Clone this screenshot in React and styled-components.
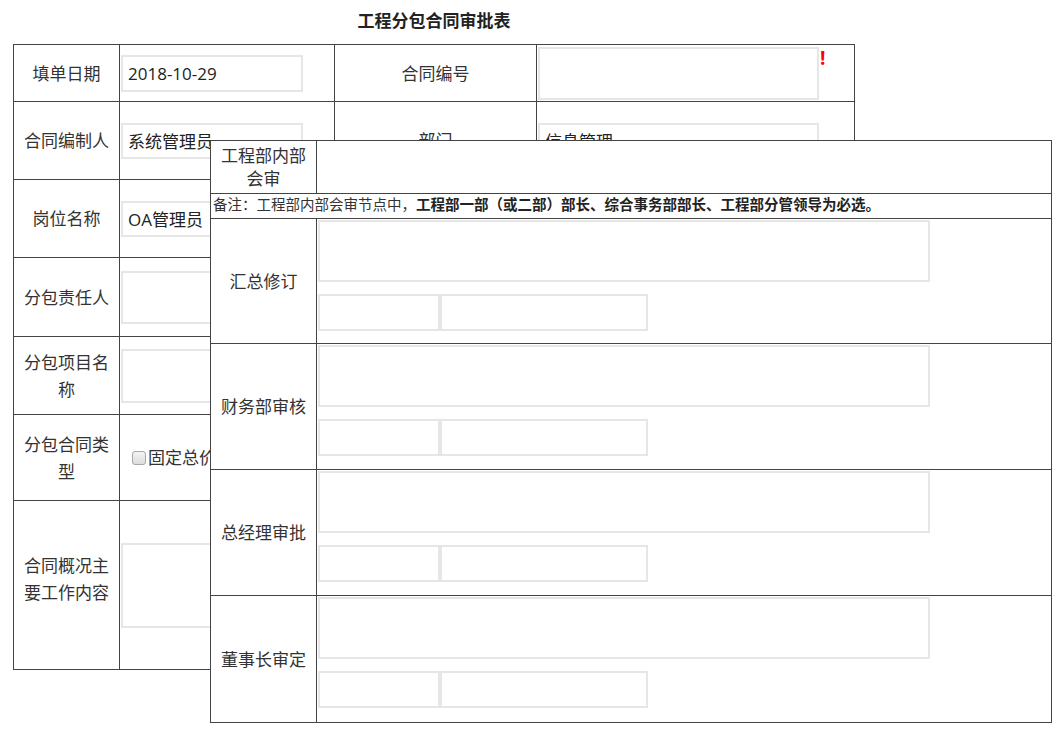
import React from "react";
import styled, { createGlobalStyle } from "styled-components";

const GlobalStyle = createGlobalStyle`
  body {
    margin: 0;
    background: #ffffff;
    font-family: "Open Sans", "Noto Sans CJK SC", sans-serif;
    color: #333333;
  }
`;

function FieldInput({ width = 182, height = 36, value = "" }) {
  return <TextInput $w={width} $h={height} defaultValue={value} readOnly />;
}

function ApprovalRow({ label, height }) {
  return (
    <tr>
      <OverlayLabel $h={height}>{label}</OverlayLabel>
      <OverlayValue>
        <ApprovalBox>
          <Opinion readOnly />
          <SignRow>
            <FieldInput width={122} height={37} />
            <FieldInput width={208} height={37} />
          </SignRow>
        </ApprovalBox>
      </OverlayValue>
    </tr>
  );
}

function App() {
  return (
    <Page>
      <GlobalStyle />
      <Title>工程分包合同审批表</Title>
      <MainTable>
        <colgroup>
          <col style={{ width: 106 }} />
          <col style={{ width: 215 }} />
          <col style={{ width: 202 }} />
          <col style={{ width: 318 }} />
        </colgroup>
        <tbody>
          <tr>
            <Label $h={57}>填单日期</Label>
            <Value>
              <FieldInput value="2018-10-29" height={37} />
            </Value>
            <Label>合同编号</Label>
            <Value>
              <Required>
                <TextArea $w={281} $h={53} readOnly />
                <Mark>!</Mark>
              </Required>
            </Value>
          </tr>
          <tr>
            <Label $h={78}>合同编制人</Label>
            <Value>
              <FieldInput value="系统管理员" />
            </Value>
            <Label>部门</Label>
            <Value>
              <FieldInput value="信息管理" width={281} />
            </Value>
          </tr>
          <tr>
            <Label $h={78}>岗位名称</Label>
            <Value>
              <FieldInput value="OA管理员" />
            </Value>
            <Label />
            <Value>
              <FieldInput width={281} />
            </Value>
          </tr>
          <tr>
            <Label $h={79}>分包责任人</Label>
            <Value>
              <TextArea $w={182} $h={53} readOnly />
            </Value>
            <Label />
            <Value>
              <TextArea $w={281} $h={53} readOnly />
            </Value>
          </tr>
          <tr>
            <Label $h={78}>分包项目名称</Label>
            <Value>
              <TextArea $w={182} $h={54} readOnly />
            </Value>
            <Label />
            <Value>
              <TextArea $w={281} $h={54} readOnly />
            </Value>
          </tr>
          <tr>
            <Label $h={86}>分包合同类型</Label>
            <Value colSpan={3}>
              <Choices>
                <Choice>
                  <Check type="checkbox" />
                  固定总价
                </Choice>
              </Choices>
            </Value>
          </tr>
          <tr>
            <Label $h={169} $shift={6}>合同概况主要工作内容</Label>
            <Value colSpan={3}>
              <TextArea $w={600} $h={85} readOnly />
            </Value>
          </tr>
        </tbody>
      </MainTable>

      <Overlay>
        <colgroup>
          <col style={{ width: 106 }} />
          <col style={{ width: 735 }} />
        </colgroup>
        <tbody>
          <tr>
            <OverlayLabel $h={53} $lh={23}>
              工程部内部会审
            </OverlayLabel>
            <OverlayValue />
          </tr>
          <tr>
            <Note colSpan={2}>
              备注：工程部内部会审节点中，
              <strong>工程部一部（或二部）部长、综合事务部部长、工程部分管领导为必选。</strong>
            </Note>
          </tr>
          <ApprovalRow label="汇总修订" height={125} />
          <ApprovalRow label="财务部审核" height={126} />
          <ApprovalRow label="总经理审批" height={126} />
          <ApprovalRow label="董事长审定" height={127} />
        </tbody>
      </Overlay>
    </Page>
  );
}

const Page = styled.div`
  position: relative;
  width: 1064px;
  height: 743px;
  overflow: hidden;
`;

const Title = styled.div`
  width: 842px;
  margin-left: 13px;
  height: 44px;
  line-height: 42px;

  text-align: center;
  font-size: 17px;
  font-weight: 700;
  color: #222222;
`;

const MainTable = styled.table`
  margin-left: 13px;
  width: 841px;
  table-layout: fixed;
  border-collapse: collapse;
`;

const Cell = styled.td`
  box-sizing: border-box;
  padding: 0;
  border: 1px solid #444444;
  vertical-align: middle;
  ${(p) => (p.$h ? `height: ${p.$h}px;` : "")}
`;

const Label = styled(Cell)`
  padding: 0 8px ${(p) => (p.$shift || 0) * 2}px;

  text-align: center;
  font-size: 17px;
  line-height: 27px;
  color: #333333;
`;

const Value = styled(Cell)`
  padding-left: 1px;
  overflow: hidden;
  white-space: nowrap;
`;

const TextInput = styled.input`
  box-sizing: border-box;
  display: block;
  width: ${(p) => p.$w}px;
  height: ${(p) => p.$h}px;
  margin: 0;
  padding: 0 5px;

  font-family: inherit;
  font-size: 17px;
  color: #222222;

  border: 2px solid #e6e6e6;
  background: #ffffff;
  outline: none;
`;

const TextArea = styled.textarea`
  box-sizing: border-box;
  display: block;
  width: ${(p) => p.$w}px;
  height: ${(p) => p.$h}px;
  margin: 0;
  padding: 4px;

  border: 2px solid #e6e6e6;
  resize: none;
  outline: none;
`;

const Required = styled.div`
  display: flex;
  align-items: flex-start;
`;

const Mark = styled.span`
  display: block;
  margin-left: 1px;
  padding-top: 1px;

  font-size: 19px;
  font-weight: 700;
  line-height: 20px;
  color: #ff0000;
`;

const Choices = styled.div`
  display: flex;
  gap: 16px;
  padding-left: 11px;
`;

const Choice = styled.label`
  display: flex;
  align-items: center;

  font-size: 17px;
  line-height: 24px;
  color: #333333;
`;

const Check = styled.input`
  appearance: none;
  box-sizing: border-box;
  width: 14px;
  height: 14px;
  margin: 0 2px 0 0;

  border: 1px solid #a8a8a8;
  border-radius: 3px;
  background: linear-gradient(#f4f4f4, #dcdcdc);
`;

const Overlay = styled.table`
  position: absolute;
  left: 210px;
  top: 140px;
  width: 841px;
  table-layout: fixed;
  border-collapse: collapse;
  background: #ffffff;
`;

const OverlayLabel = styled(Cell)`
  padding: 0 8px;

  text-align: center;
  font-size: 17px;
  line-height: ${(p) => p.$lh || 27}px;
  color: #333333;
`;

const OverlayValue = styled(Cell)`
  vertical-align: top;
  padding: 1px 0 0 1px;
`;

const Note = styled(Cell)`
  height: 25px;
  padding: 0 0 2px 2px;

  font-size: 14.5px;
  line-height: 22px;
  white-space: nowrap;
  color: #333333;

  strong {
    color: #222222;
    font-weight: 700;
  }
`;

const ApprovalBox = styled.div`
  display: flex;
  flex-direction: column;
  gap: 12px;
`;

const Opinion = styled.textarea`
  box-sizing: border-box;
  display: block;
  width: 612px;
  height: 62px;
  margin: 0;

  border: 2px solid #e6e6e6;
  resize: none;
  outline: none;
`;

const SignRow = styled.div`
  display: flex;
`;

export default App;
